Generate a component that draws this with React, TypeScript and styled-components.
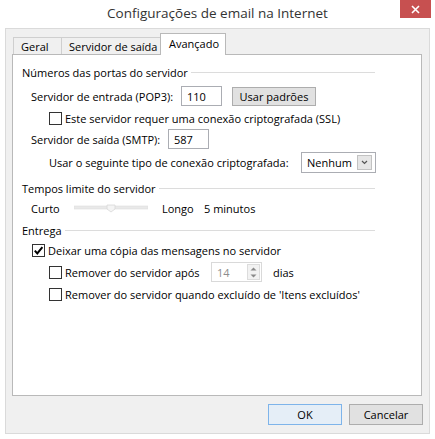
import React from "react";
import styled, { createGlobalStyle } from "styled-components";

const Global = createGlobalStyle`
  html, body { margin: 0; padding: 0; background: #fff; }
  body {
    font-family: "Open Sans", "Noto Sans", sans-serif;
    font-size: 11px;
    color: #000;
  }
  * { box-sizing: border-box; }
`;

const Window = styled.div`
  width: 435px;
  height: 439px;
  background: #fff;
  display: flex;
  flex-direction: column;
  overflow: hidden;
`;

const TitleBar = styled.div`
  height: 28px;
  display: grid;
  grid-template-columns: 1fr auto 1fr;
  align-items: start;
`;

const Title = styled.div`
  grid-column: 2;
  font-size: 13.5px;
  color: #333;
  line-height: 26px;
  white-space: nowrap;
`;

const CloseButton = styled.div`
  grid-column: 3;
  justify-self: end;
  margin-right: 4px;
  width: 31px;
  height: 18px;
  background: #c75050;
  display: flex;
  align-items: center;
  justify-content: center;
`;

const Frame = styled.div`
  margin: 0 5px 5px 5px;
  flex: 1;
  background: #f0f0f0;
  border: 1px solid #dadada;
  display: flex;
  flex-direction: column;
  padding-top: 4px;
`;

const TabStrip = styled.div`
  display: flex;
  align-items: flex-end;
  height: 21px;
  padding-left: 7px;
  position: relative;
  z-index: 1;
`;

const Tab = styled.div<{ $w: number; $active?: boolean }>`
  width: ${(p) => p.$w}px;
  height: ${(p) => (p.$active ? 22 : 17)}px;
  margin: ${(p) => (p.$active ? "0 -2px -1px -2px" : "0 0 0 -1px")};
  border: 1px solid ${(p) => (p.$active ? "#b9b9b9" : "#cfcfcf")};
  border-bottom: none;
  background: ${(p) => (p.$active ? "#fff" : "#f0f0f0")};
  display: flex;
  align-items: ${(p) => (p.$active ? "flex-start" : "center")};
  padding-top: ${(p) => (p.$active ? 2 : 0)}px;
  padding-left: ${(p) => (p.$active ? 8 : 7)}px;
  white-space: nowrap;
  &:first-child { margin-left: 0; }
`;

const Panel = styled.div`
  margin: 0 7px 0 6px;
  height: 342px;
  background: #fff;
  border: 1px solid #b9b9b9;
  padding: 9px 0 0 9px;
  display: flex;
  flex-direction: column;
`;

const Header = styled.div<{ $top: number }>`
  margin-top: ${(p) => p.$top}px;
  width: 353px;
  height: 16px;
  display: flex;
  align-items: center;
  gap: 3px;
  white-space: nowrap;
  &::after {
    content: "";
    flex: 1;
    border-top: 1px solid #dcdcdc;
    margin-top: 1px;
  }
`;

const Row = styled.div<{ $top: number; $indent: number; $h: number }>`
  margin-top: ${(p) => p.$top}px;
  margin-left: ${(p) => p.$indent}px;
  height: ${(p) => p.$h}px;
  display: flex;
  align-items: center;
  white-space: nowrap;
`;

const Label = styled.span<{ $w?: number }>`
  display: inline-block;
  ${(p) => (p.$w ? `width: ${p.$w}px;` : "")}
  flex-shrink: 0;
`;

const TextBox = styled.div<{ $w: number; $disabled?: boolean }>`
  width: ${(p) => p.$w}px;
  height: 20px;
  border: 1px solid ${(p) => (p.$disabled ? "#d9d9d9" : "#abadb3")};
  background: #fff;
  color: ${(p) => (p.$disabled ? "#8d8d8d" : "#000")};
  display: flex;
  align-items: center;
  padding-left: 5px;
  flex-shrink: 0;
`;

const Button = styled.div<{ $w: number; $h?: number; $default?: boolean }>`
  width: ${(p) => p.$w}px;
  height: ${(p) => p.$h ?? 21}px;
  border: 1px solid ${(p) => (p.$default ? "#7eb4ea" : "#adadad")};
  background: ${(p) => (p.$default ? "#e5eef7" : "#e1e1e1")};
  display: flex;
  align-items: center;
  justify-content: center;
  flex-shrink: 0;
`;

const Box = styled.div<{ $checked?: boolean }>`
  width: 13px;
  height: 13px;
  border: 1px solid #333;
  background: #fff;
  flex-shrink: 0;
  display: flex;
  align-items: center;
  justify-content: center;
  margin-right: 3px;
`;

const Select = styled.div`
  width: 75px;
  height: 21px;
  border: 1px solid #abadb3;
  background: #fff;
  display: flex;
  align-items: center;
  justify-content: space-between;
  padding: 0 3px 0 5px;
`;

const DropButton = styled.div`
  width: 15px;
  height: 15px;
  background: #e6e6e6;
  border: 1px solid #c2c2c2;
  display: flex;
  align-items: center;
  justify-content: center;
`;

const SpinBox = styled(TextBox)`
  justify-content: space-between;
  padding-right: 1px;
`;

const SpinButtons = styled.div`
  width: 13px;
  height: 16px;
  background: #f2f2f2;
  border: 1px solid #dcdcdc;
  display: flex;
  flex-direction: column;
  align-items: center;
  justify-content: space-around;
`;

const Spacer = styled.span<{ $w: number }>`
  display: inline-block;
  width: ${(p) => p.$w}px;
  flex-shrink: 0;
`;

const ButtonBar = styled.div`
  margin-top: 8px;
  display: flex;
  justify-content: flex-end;
  gap: 7px;
  padding-right: 6px;
`;

const Check = ({ checked }: { checked?: boolean }) => (
  <Box $checked={checked}>
    {checked && (
      <svg width="11" height="11" viewBox="0 0 11 11">
        <path d="M1.8 5.6 L4.3 8.4 L9.4 2.2" fill="none" stroke="#000" strokeWidth="2" />
      </svg>
    )}
  </Box>
);

export default function App() {
  return (
    <Window>
      <Global />
      <TitleBar>
        <Title>Configurações de email na Internet</Title>
        <CloseButton>
          <svg width="9" height="9" viewBox="0 0 9 9">
            <path d="M1 1 L8 8 M8 1 L1 8" stroke="#fff" strokeWidth="1.6" />
          </svg>
        </CloseButton>
      </TitleBar>
      <Frame>
        <TabStrip>
          <Tab $w={49}>Geral</Tab>
          <Tab $w={101}>Servidor de saída</Tab>
          <Tab $w={66} $active>
            Avançado
          </Tab>
        </TabStrip>
        <Panel>
          <Header $top={0}>Números das portas do servidor</Header>
          <Row $top={6} $indent={9} $h={20}>
            <Label $w={150}>Servidor de entrada (POP3):</Label>
            <TextBox $w={41}>110</TextBox>
            <Spacer $w={10} />
            <Button $w={84} $h={19}>Usar padrões</Button>
          </Row>
          <Row $top={6} $indent={27} $h={13}>
            <Check />
            <Label>Este servidor requer uma conexão criptografada (SSL)</Label>
          </Row>
          <Row $top={4} $indent={9} $h={20}>
            <Label $w={137}>Servidor de saída (SMTP):</Label>
            <TextBox $w={41}>587</TextBox>
          </Row>
          <Row $top={3} $indent={27} $h={21}>
            <Label $w={252}>Usar o seguinte tipo de conexão criptografada:</Label>
            <Select>
              <span>Nenhum</span>
              <DropButton>
                <svg width="7" height="5" viewBox="0 0 7 5">
                  <path d="M1 1 L3.5 3.5 L6 1" fill="none" stroke="#555" strokeWidth="1.2" />
                </svg>
              </DropButton>
            </Select>
          </Row>
          <Header $top={7}>Tempos limite do servidor</Header>
          <Row $top={4} $indent={9} $h={16}>
            <Label $w={43}>Curto</Label>
            <svg width="74" height="9" viewBox="0 0 74 9">
              <rect x="0" y="2" width="74" height="3" fill="#e9e9e9" stroke="#dedede" strokeWidth="0.6" />
              <path d="M33 1 H41 V5 L37 8 L33 5 Z" fill="#f4f4f4" stroke="#d8d8d8" strokeWidth="0.8" />
            </svg>
            <Spacer $w={14} />
            <Label $w={42}>Longo</Label>
            <Label>5 minutos</Label>
          </Row>
          <Header $top={6}>Entrega</Header>
          <Row $top={6} $indent={10} $h={13}>
            <Check checked />
            <Label>Deixar uma cópia das mensagens no servidor</Label>
          </Row>
          <Row $top={5} $indent={27} $h={20}>
            <Check />
            <Label $w={146}>Remover do servidor após</Label>
            <SpinBox $w={51} $disabled>
              <span>14</span>
              <SpinButtons>
                <svg width="7" height="4" viewBox="0 0 7 4">
                  <path d="M0.5 3.5 L3.5 0.5 L6.5 3.5 Z" fill="#8a8a8a" />
                </svg>
                <svg width="7" height="4" viewBox="0 0 7 4">
                  <path d="M0.5 0.5 L3.5 3.5 L6.5 0.5 Z" fill="#8a8a8a" />
                </svg>
              </SpinButtons>
            </SpinBox>
            <Spacer $w={11} />
            <Label>dias</Label>
          </Row>
          <Row $top={6} $indent={27} $h={13}>
            <Check />
            <Label>Remover do servidor quando excluído de 'Itens excluídos'</Label>
          </Row>
        </Panel>
        <ButtonBar>
          <Button $w={74} $default>OK</Button>
          <Button $w={74}>Cancelar</Button>
        </ButtonBar>
      </Frame>
    </Window>
  );
}
